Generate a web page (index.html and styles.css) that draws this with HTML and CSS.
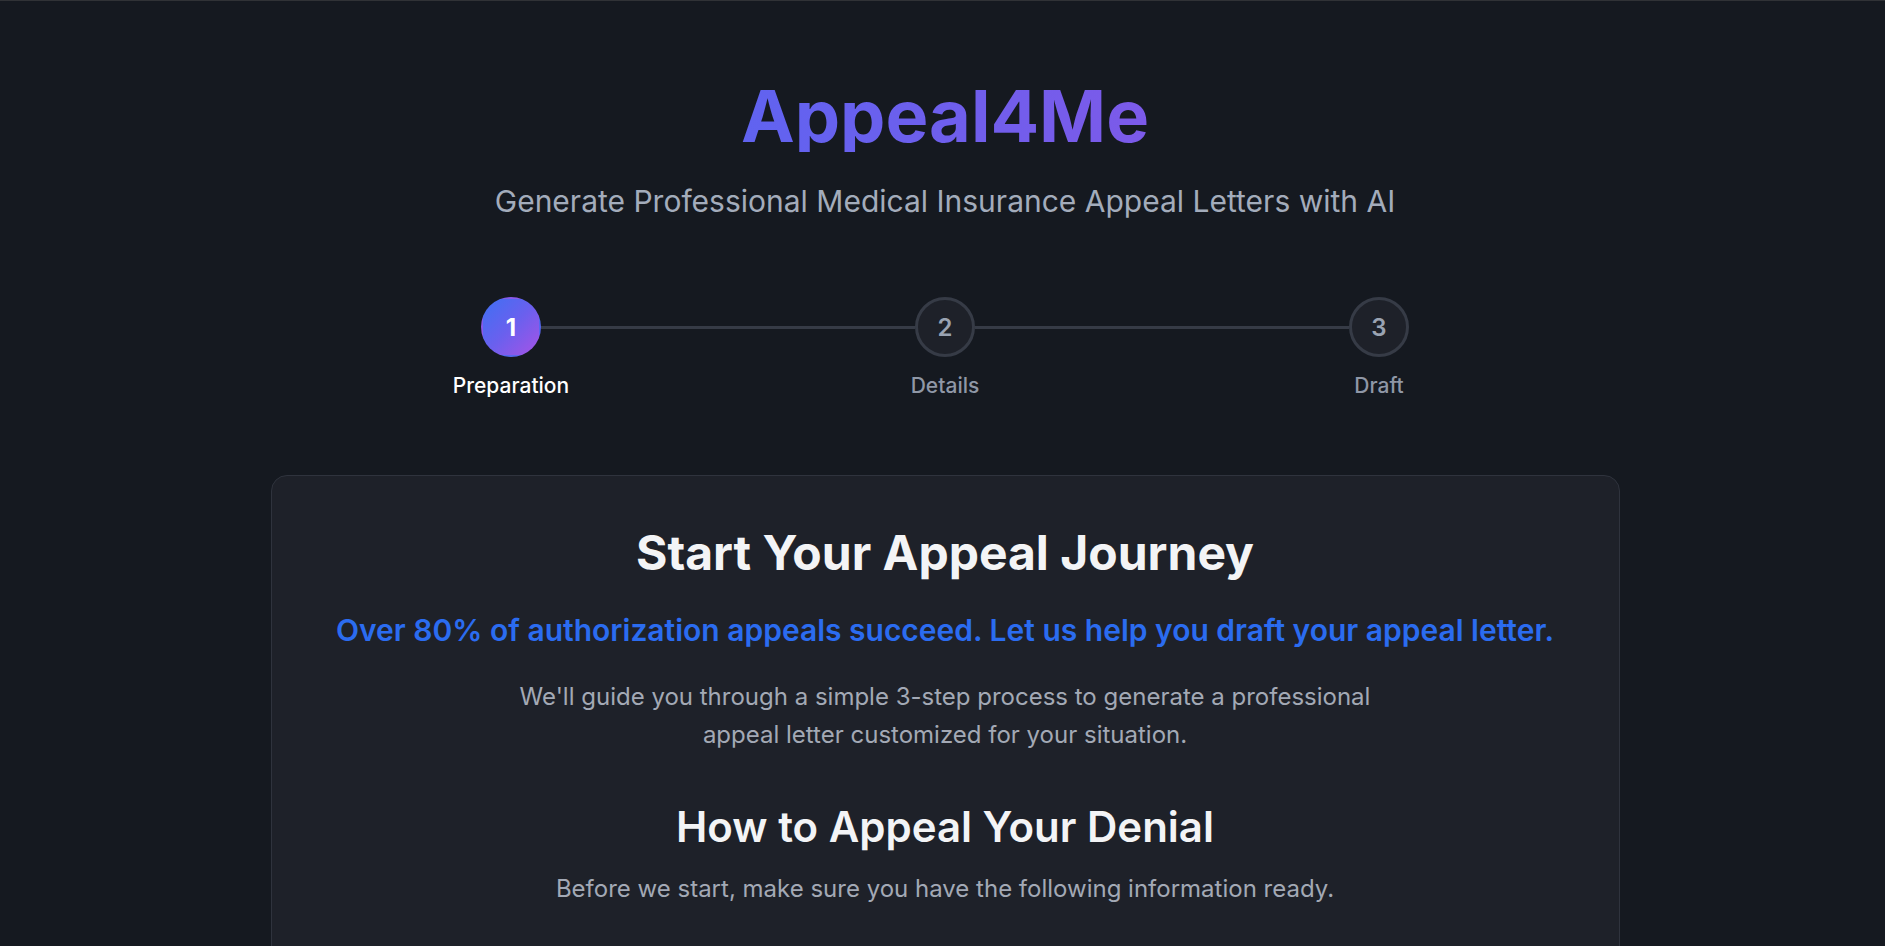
FILE: index.html
```html
<!DOCTYPE html>
<html lang="en">
<head>
<meta charset="utf-8">
<title>Appeal4Me</title>
<link rel="stylesheet" href="styles.css">
</head>
<body>
<div class="page">
  <header class="hero">
    <h1 class="brand">Appeal4Me</h1>
    <p class="tagline">Generate Professional Medical Insurance Appeal Letters with AI</p>
  </header>

  <nav class="stepper">
    <div class="step active">
      <div class="circle">1</div>
      <div class="label">Preparation</div>
    </div>
    <div class="connector"></div>
    <div class="step">
      <div class="circle">2</div>
      <div class="label">Details</div>
    </div>
    <div class="connector"></div>
    <div class="step">
      <div class="circle">3</div>
      <div class="label">Draft</div>
    </div>
  </nav>

  <main class="card">
    <h2 class="card-title">Start Your Appeal Journey</h2>
    <p class="highlight">Over 80% of authorization appeals succeed. Let us help you draft your appeal letter.</p>
    <p class="intro">We'll guide you through a simple 3-step process to generate a professional appeal letter customized for your situation.</p>
    <h3 class="section-title">How to Appeal Your Denial</h3>
    <p class="section-sub">Before we start, make sure you have the following information ready.</p>
  </main>
</div>
</body>
</html>
```

FILE: styles.css
```css
* { box-sizing: border-box; }

html, body {
  margin: 0;
  padding: 0;
  background: #151920;
}

body {
  font-family: "Inter", "Noto Sans", "Liberation Sans", sans-serif;
  color: #e5e7eb;
  border-top: 1px solid #303236;
}

.page {
  height: calc(100vh - 1px);
  overflow: hidden;
  padding: 0 0 0 5px;
}

.hero {
  text-align: center;
  padding-top: 79px;
}

.brand {
  margin: 0;
  display: inline-block;
  font-size: 72px;
  line-height: 72px;
  font-weight: 700;
  letter-spacing: 0;
  background: linear-gradient(90deg, #6063f0 0%, #7c5ae9 100%);
  -webkit-background-clip: text;
  background-clip: text;
  color: transparent;
}

.tagline {
  margin: 31px 0 0;
  font-size: 30px;
  line-height: 36px;
  color: #a3acbb;
  font-weight: 400;
}

.stepper {
  display: flex;
  align-items: flex-start;
  width: 928px;
  margin: 78px auto 0;
}

.step {
  width: 60px;
  flex: none;
  display: flex;
  flex-direction: column;
  align-items: center;
}

.circle {
  width: 60px;
  height: 60px;
  border-radius: 50%;
  border: 3px solid #363b46;
  background: #1e2129;
  display: flex;
  align-items: center;
  justify-content: center;
  font-size: 24px;
  font-weight: 600;
  color: #9aa3b2;
}

.step.active .circle {
  border: 2px solid transparent;
  background: linear-gradient(135deg, #3f70f3 0%, #6a60ee 50%, #a653e6 100%);
  color: #ffffff;
  font-weight: 700;
}

.label {
  margin-top: 14px;
  font-size: 21px;
  line-height: 29px;
  font-weight: 500;
  white-space: nowrap;
  color: #8f97a6;
}

.step.active .label {
  color: #ffffff;
}

.connector {
  flex: 1;
  height: 3px;
  margin-top: 29px;
  background: #363b46;
}

.card {
  max-width: 1349px;
  margin: 75px auto 0;
  background: #1e2129;
  border: 1px solid #2f333d;
  border-radius: 16px;
  padding: 49px 40px 300px;
  text-align: center;
}

.card-title {
  margin: 0;
  font-size: 48px;
  line-height: 56px;
  font-weight: 700;
  color: #f3f4f6;
}

.highlight {
  margin: 31px 0 0;
  font-size: 30px;
  line-height: 36px;
  font-weight: 600;
  color: #2b6cf0;
}

.intro {
  max-width: 890px;
  margin: 30px auto 0;
  font-size: 24px;
  line-height: 38px;
  color: #a3a9b5;
}

.section-title {
  margin: 49px 0 0;
  font-size: 42px;
  line-height: 48px;
  font-weight: 600;
  color: #f3f4f6;
}

.section-sub {
  margin: 19px 0 0;
  font-size: 24px;
  line-height: 38px;
  color: #a3a9b5;
}
```
